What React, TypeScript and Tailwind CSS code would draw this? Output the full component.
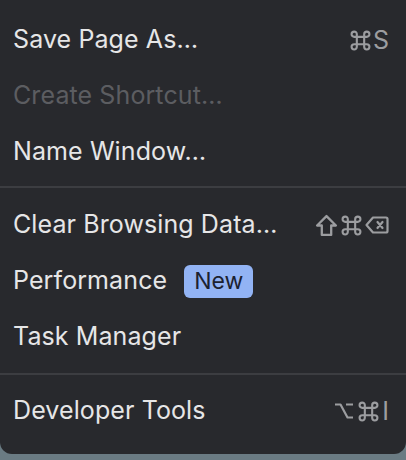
const stroke = {
  fill: 'none',
  stroke: '#9c9da0',
  strokeWidth: 2.2,
  strokeLinejoin: 'round' as const,
  strokeLinecap: 'round' as const,
};

const Cmd = () => (
  <svg width="21" height="21" viewBox="0 0 20 20" {...stroke} strokeWidth={2}>
    <path d="M6.5 4A2.5 2.5 0 1 0 4 6.5H16A2.5 2.5 0 1 0 13.5 4V16A2.5 2.5 0 1 0 16 13.5H4A2.5 2.5 0 1 0 6.5 16Z" />
  </svg>
);

const Shift = () => (
  <svg width="23" height="23" viewBox="0 0 22 22" {...stroke}>
    <path d="M11 2L20 11H15.5V20H6.5V11H2Z" />
  </svg>
);

const Del = () => (
  <svg width="24" height="18" viewBox="0 0 24 18" {...stroke}>
    <path d="M8 1.5H21A1.5 1.5 0 0 1 22.5 3V15A1.5 1.5 0 0 1 21 16.5H8L1.5 9Z" />
    <path d="M12.5 6L17.5 12M17.5 6L12.5 12" />
  </svg>
);

const Opt = () => (
  <svg width="20" height="18" viewBox="0 0 20 18" {...stroke} strokeLinecap="butt">
    <path d="M1 2.5H6.5L13.5 15.5H19M12 2.5H19" />
  </svg>
);

type Item =
  | 'sep1'
  | 'sep2'
  | { label: string; disabled?: boolean; badge?: string; keys?: React.ReactNode };

const items: Item[] = [
  { label: 'Save Page As…', keys: <><Cmd /><span className="ml-[2px]">S</span></> },
  { label: 'Create Shortcut…', disabled: true },
  { label: 'Name Window…' },
  'sep1',
  { label: 'Clear Browsing Data…', keys: <><Shift /><span className="ml-[3px]"><Cmd /></span><span className="ml-[3px]"><Del /></span></> },
  { label: 'Performance', badge: 'New' },
  { label: 'Task Manager' },
  'sep2',
  { label: 'Developer Tools', keys: <><Opt /><span className="ml-[4px]"><Cmd /></span><span className="ml-[3px]">I</span></> },
];

export default function App() {
  return (
    <div className="h-[460px] w-[406px] overflow-hidden bg-[#6a7b83] font-['Inter',sans-serif]">
      <div className="h-[454px] bg-[#28292d] rounded-b-[12px] pt-[12px]">
        {items.map((item, i) =>
          item === 'sep1' ? (
            <div key={i} className="h-[17px] pt-[6px]">
              <div className="h-[2px] bg-[#3c3d41]" />
            </div>
          ) : item === 'sep2' ? (
            <div key={i} className="h-[18px] pt-[8px]">
              <div className="h-[2px] bg-[#3c3d41]" />
            </div>
          ) : (
            <div key={i} className="h-[56px] flex items-center pl-[13px] pr-[17px]">
              <span
                className={
                  'text-[25px] tracking-[0.1px] ' +
                  (item.disabled ? 'text-[#5c5d61]' : 'text-[#e6e6e7]')
                }
              >
                {item.label}
              </span>
              {item.badge && (
                <span className="ml-[17px] h-[33px] px-[10px] rounded-[6px] bg-[#92b3f4] text-[#1c2230] text-[23px] flex items-center">
                  {item.badge}
                </span>
              )}
              {item.keys && (
                <span className="ml-auto flex items-center text-[25px] leading-none text-[#9c9da0]">
                  {item.keys}
                </span>
              )}
            </div>
          )
        )}
      </div>
    </div>
  );
}
